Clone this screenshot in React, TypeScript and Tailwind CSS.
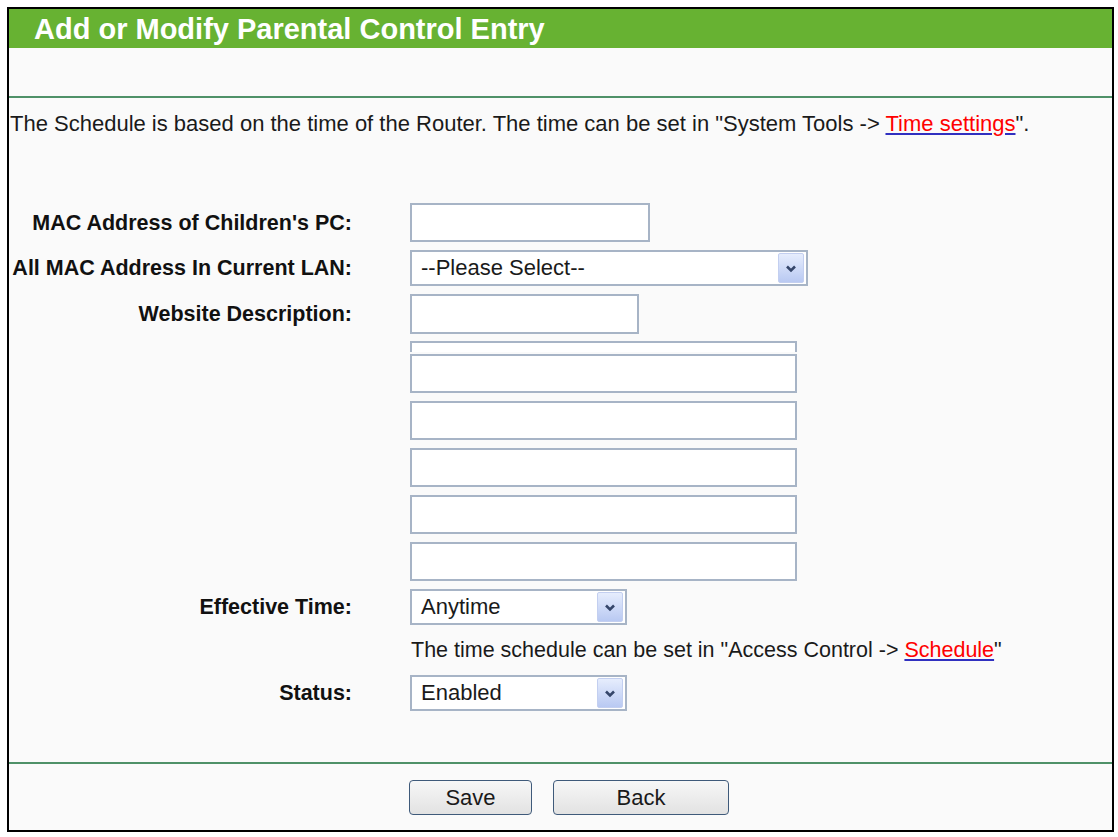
import React from "react";

function Chevron() {
  return (
    <div className="mr-[2px] flex h-[30px] w-[26px] items-center justify-center rounded-[2px] border border-[#c3cff0] bg-gradient-to-b from-[#e6edfd] to-[#b9c9f2]">
      <svg width="12" height="9" viewBox="0 0 12 9">
        <path d="M2 2.5 L6 6.5 L10 2.5" fill="none" stroke="#35466a" strokeWidth="2.6" />
      </svg>
    </div>
  );
}

function Select({ value, className }: { value: string; className: string }) {
  return (
    <div
      className={`flex h-[36px] items-center justify-between border-2 border-[#a7b4c6] bg-white pl-[9px] ${className}`}
    >
      <span className="text-[22px] leading-[24px] text-[#1a1a1a]">{value}</span>
      <Chevron />
    </div>
  );
}

function Label({ children }: { children: React.ReactNode }) {
  return (
    <div className="w-[343px] shrink-0 text-right text-[21.5px] leading-[24px] font-bold text-[#111]">
      {children}
    </div>
  );
}

export default function App() {
  const stacked = [0, 1, 2, 3, 4];

  return (
    <div className="min-h-screen bg-white pl-[7px] pt-[7px] font-['Liberation_Sans',Arial,sans-serif]">
      <div className="flex h-[825px] w-[1107px] flex-col border-2 border-black bg-[#fafafa]">
        {/* Header */}
        <div className="flex h-[39px] items-center bg-[#67b232] pl-[25px]">
          <span className="text-[29px] leading-[32px] font-bold text-white">
            Add or Modify Parental Control Entry
          </span>
        </div>

        <div className="h-[48px]" />
        <div className="h-[2px] bg-[#4f9168]" />

        <p className="mt-[14px] pl-[1px] text-[22px] leading-[24px] text-[#1a1a1a]">
          The Schedule is based on the time of the Router. The time can be set in "System Tools -&gt;{" "}
          <span className="text-[#ff0000] underline decoration-[#3030c0]">Time settings</span>".
        </p>

        {/* Form rows */}
        <div className="mt-[67px] flex flex-col">
          <div className="flex h-[39px] items-center">
            <Label>MAC Address of Children's PC:</Label>
            <div className="ml-[58px] h-[39px] w-[240px] border-2 border-[#a7b4c6] bg-white" />
          </div>

          <div className="mt-[8px] flex items-center">
            <Label>All MAC Address In Current LAN:</Label>
            <Select value="--Please Select--" className="ml-[58px] w-[398px]" />
          </div>

          <div className="mt-[8px] flex h-[40px] items-center">
            <Label>Website Description:</Label>
            <div className="ml-[58px] h-[40px] w-[229px] border-2 border-[#a7b4c6] bg-white" />
          </div>

          <div className="ml-[401px] mt-[7px] flex flex-col">
            <div className="h-[11px] w-[387px] border-x-2 border-t-2 border-[#a7b4c6] bg-white" />
            <div className="mt-[2px] flex flex-col gap-[8px]">
              {stacked.map((i) => (
                <div key={i} className="h-[39px] w-[387px] border-2 border-[#a7b4c6] bg-white" />
              ))}
            </div>
          </div>

          <div className="mt-[8px] flex items-center">
            <Label>Effective Time:</Label>
            <Select value="Anytime" className="ml-[58px] w-[217px]" />
          </div>

          <div className="flex h-[50px] items-center pl-[402px]">
            <span className="text-[21.5px] leading-[24px] text-[#1a1a1a]">
              The time schedule can be set in "Access Control -&gt;{" "}
              <span className="text-[#ff0000] underline decoration-[#3030c0]">Schedule</span>"
            </span>
          </div>

          <div className="flex items-center">
            <Label>Status:</Label>
            <Select value="Enabled" className="ml-[58px] w-[217px]" />
          </div>
        </div>

        <div className="mt-[51px] h-[2px] bg-[#4f9168]" />

        {/* Buttons */}
        <div className="mt-[16px] flex gap-[21px] pl-[400px]">
          <button className="h-[35px] w-[123px] rounded-[4px] border border-[#3f5a7a] bg-gradient-to-b from-[#f7f7f7] to-[#e2e2e2] text-[22px] leading-[24px] text-[#1a1a1a]">
            Save
          </button>
          <button className="h-[35px] w-[176px] rounded-[4px] border border-[#3f5a7a] bg-gradient-to-b from-[#f7f7f7] to-[#e2e2e2] text-[22px] leading-[24px] text-[#1a1a1a]">
            Back
          </button>
        </div>
      </div>
    </div>
  );
}
